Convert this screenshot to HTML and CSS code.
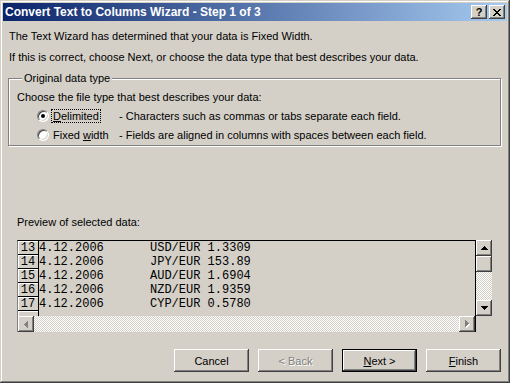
FILE: index.html
```html
<!doctype html>
<html lang="en">
<head>
  <title>Convert Text to Columns Wizard - Step 1 of 3</title>
  <meta charset="utf-8">
  <link rel="stylesheet" href="styles.css">
</head>
<body>

  <div class="window">
    <div class="titlebar">
      <span class="title">Convert Text to Columns Wizard - Step 1 of 3</span>
      <div class="caption-buttons">
        <span class="cap-btn help">?</span>
        <span class="cap-btn close">
          <svg width="8" height="7" viewBox="0 0 8 7" shape-rendering="crispEdges"><path d="M0 0h2v1h1v1h2V1h1V0h2v1H7v1H6v1H5v1h1v1h1v1h1v1H6V6H5V5H3v1H2v1H0V6h1V5h1V4h1V3H2V2H1V1H0z" fill="#000"/></svg>
        </span>
      </div>
    </div>

    <div class="content">
      <p class="intro first">The Text Wizard has determined that your data is Fixed Width.</p>
      <p class="intro">If this is correct, choose Next, or choose the data type that best describes your data.</p>

      <fieldset class="group">
        <legend>Original data type</legend>
        <p class="choose">Choose the file type that best describes your data:</p>
        <div class="option">
          <span class="radio checked"></span>
          <span class="label"><span class="focus"><u>D</u>elimited</span></span>
          <span class="desc">- Characters such as commas or tabs separate each field.</span>
        </div>
        <div class="option">
          <span class="radio"></span>
          <span class="label"><span>Fixed <u>w</u>idth</span></span>
          <span class="desc">- Fields are aligned in columns with spaces between each field.</span>
        </div>
      </fieldset>

      <p class="preview-label">Preview of selected data:</p>

      <div class="preview">
        <div class="sheet">
          <div class="rows">
            <div class="row"><span class="rowhead">13</span><span class="cell"><span class="date">4.12.2006</span>USD/EUR 1.3309</span></div>
            <div class="row"><span class="rowhead">14</span><span class="cell"><span class="date">4.12.2006</span>JPY/EUR 153.89</span></div>
            <div class="row"><span class="rowhead">15</span><span class="cell"><span class="date">4.12.2006</span>AUD/EUR 1.6904</span></div>
            <div class="row"><span class="rowhead">16</span><span class="cell"><span class="date">4.12.2006</span>NZD/EUR 1.9359</span></div>
            <div class="row"><span class="rowhead">17</span><span class="cell"><span class="date">4.12.2006</span>CYP/EUR 0.5780</span></div>
            <div class="row"><span class="rowhead"></span><span class="cell"></span></div>
          </div>
          <div class="hscroll">
            <span class="sbtn">
              <svg width="4" height="7" viewBox="0 0 4 7" shape-rendering="crispEdges"><path d="M3 0h1v7H3V6H2V5H1V4H0V3h1V2h1V1h1z" fill="#808080"/></svg>
            </span>
            <span class="track"></span>
            <span class="sbtn">
              <svg width="5" height="8" viewBox="0 0 5 8" shape-rendering="crispEdges"><path d="M1 1h1v1h1v1h1v1h1v1H4v1H3v1H2v1H1z" fill="#fff"/><path d="M0 0h1v1h1v1h1v1h1v1H3v1H2v1H1v1H0z" fill="#808080"/></svg>
            </span>
          </div>
        </div>
        <div class="vscroll">
          <span class="sbtn">
            <svg width="7" height="4" viewBox="0 0 7 4" shape-rendering="crispEdges"><path d="M3 0h1v1h1v1h1v1h1v1H0V3h1V2h1V1h1z" fill="#000"/></svg>
          </span>
          <span class="sbtn"></span>
          <span class="track"></span>
          <span class="sbtn">
            <svg width="7" height="4" viewBox="0 0 7 4" shape-rendering="crispEdges"><path d="M0 0h7v1H6v1H5v1H4v1H3V3H2V2H1V1H0z" fill="#000"/></svg>
          </span>
        </div>
      </div>

      <div class="buttons">
        <span class="btn">Cancel</span>
        <span class="btn disabled">&lt; Back</span>
        <span class="btn default"><u>N</u>ext &gt;</span>
        <span class="btn"><u>F</u>inish</span>
      </div>
    </div>
  </div>

</body>
</html>
```

FILE: styles.css
```css
body {
  margin: 0;
  background: #d4d0c8;
  font: 11px "Liberation Sans", Arial, sans-serif;
  color: #000;
}
p {
  margin: 0;
  line-height: 13px;
}

.window {
  width: 510px;
  height: 383px;
  box-sizing: border-box;
  padding: 3px;
  background: #d4d0c8;
  box-shadow: inset -1px -1px #404040, inset 1px 1px #d4d0c8,
              inset -2px -2px #808080, inset 2px 2px #fff;
}

/* title bar */
.titlebar {
  height: 18px;
  display: flex;
  align-items: center;
  justify-content: space-between;
  padding: 0 2px;
  background: linear-gradient(to right, #0a246a, #a6caf0);
  color: #fff;
  font-weight: bold;
  font-size: 12px;
}
.caption-buttons {
  display: flex;
  gap: 2px;
}
.cap-btn, .sbtn, .btn {
  box-sizing: border-box;
  background: #d4d0c8;
  box-shadow: inset -1px -1px #404040, inset 1px 1px #fff,
              inset -2px -2px #808080, inset 2px 2px #d4d0c8;
  display: flex;
  align-items: center;
  justify-content: center;
}
.cap-btn {
  width: 16px;
  height: 14px;
  color: #000;
  font-size: 11px;
}
.cap-btn svg {
  display: block;
}

/* body */
.content {
  padding: 0 6px 0 5px;
}
.intro {
  padding-left: 1px;
  margin-top: 8px;
}
.intro.first {
  margin-top: 9px;
}

.group {
  margin: 8px 0 0 0;
  padding: 0 0 1px 8px;
  border: 1px solid #808080;
  box-shadow: inset 1px 1px #fff, 1px 1px #fff;
}
.group legend {
  padding: 0 2px;
  margin-left: 5px;
  line-height: 13px;
  background: #d4d0c8;
}
.choose {
  margin-top: 6px;
  margin-bottom: 2px;
}
.option {
  display: flex;
  align-items: center;
  height: 19px;
}
.radio {
  width: 12px;
  height: 12px;
  box-sizing: border-box;
  margin-left: 20px;
  border-radius: 50%;
  background: #fff;
  border: 1px solid;
  border-color: #808080 #fff #fff #808080;
  box-shadow: inset 1px 1px #404040, inset -1px -1px #d4d0c8;
  display: flex;
  align-items: center;
  justify-content: center;
}
.radio.checked::after {
  content: "";
  width: 4px;
  height: 4px;
  border-radius: 50%;
  background: #000;
}
.label {
  width: 68px;
  flex: none;
  margin-left: 2px;
}
.label > span {
  display: inline-block;
  padding: 0 1px;
  line-height: 12px;
  border: 1px dotted transparent;
}
.label > .focus {
  border-color: #000;
}

.preview-label {
  margin-top: 70px;
  padding-left: 9px;
}

/* preview grid */
.preview {
  display: flex;
  margin: 11px 0 0 9px;
}
.sheet {
  width: 459px;
  box-sizing: border-box;
  border-top: 1px solid #000;
  border-right: 1px solid #000;
  border-left: 1px solid #808080;
  display: flex;
  flex-direction: column;
}
.rows {
  height: 75px;
  overflow: hidden;
  font: 12px "Liberation Mono", "Courier New", monospace;
}
.row {
  display: flex;
  height: 14px;
}
.rowhead {
  width: 21px;
  flex: none;
  box-sizing: border-box;
  border-right: 1px solid #000;
  border-bottom: 1px solid #000;
  box-shadow: inset 1px 1px #fff;
  text-align: center;
  line-height: 14px;
}
.cell {
  line-height: 14px;
  white-space: pre;
}
.date {
  display: inline-block;
  width: 111px;
}
.hscroll {
  height: 16px;
  display: flex;
}
.sbtn {
  width: 16px;
  height: 16px;
  flex: none;
}
.track {
  flex: 1;
  background: repeating-conic-gradient(#fff 0 25%, #d4d0c8 0 50%) 0 0 / 2px 2px;
}
.vscroll {
  width: 16px;
  height: 76px;
  display: flex;
  flex-direction: column;
}

/* dialog buttons */
.buttons {
  display: flex;
  justify-content: flex-end;
  gap: 9px;
  margin-top: 17px;
}
.btn {
  width: 75px;
  height: 23px;
}
.btn.default {
  border: 1px solid #000;
}
.btn.disabled {
  color: #808080;
  text-shadow: 1px 1px #fff;
}
```
